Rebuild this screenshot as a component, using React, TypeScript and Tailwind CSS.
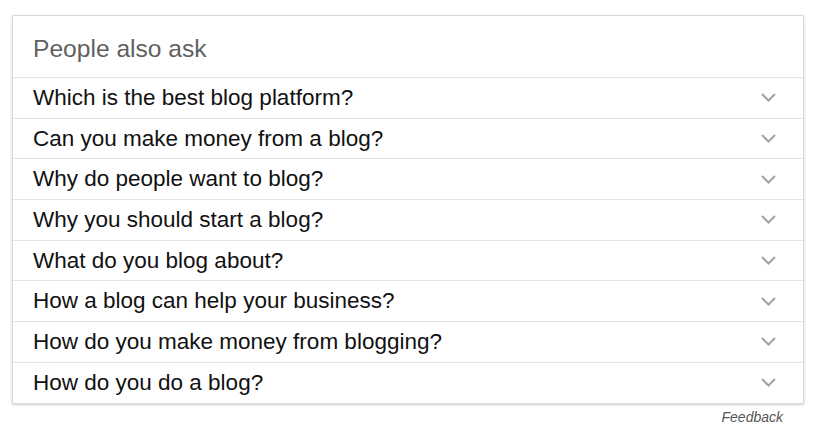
import React from "react";

const questions = [
  "Which is the best blog platform?",
  "Can you make money from a blog?",
  "Why do people want to blog?",
  "Why you should start a blog?",
  "What do you blog about?",
  "How a blog can help your business?",
  "How do you make money from blogging?",
  "How do you do a blog?",
];

function Chevron() {
  return (
    <svg width="15" height="9" viewBox="0 0 15 9" className="shrink-0">
      <polyline points="1,1 7.5,7.5 14,1" fill="none" stroke="#a3a3a3" strokeWidth="2" />
    </svg>
  );
}

export default function App() {
  return (
    <div className="w-[818px] h-[433px] bg-white pt-[15px] pl-[12px] font-['Liberation_Sans',Arial,sans-serif]">
      <div className="w-[792px] rounded-[2px] border border-[#dadada] shadow-[0_1px_3px_rgba(0,0,0,0.2)] bg-white">
        <div className="h-[61px] flex items-center pl-[20px] pt-[5px] text-[24.6px] text-[#5f5f5f]">People also ask</div>
        {questions.map((q) => (
          <div key={q} className="h-[40.7px] border-t border-[#e3e3e3] flex items-center justify-between pl-[20px] pr-[27px] text-[22.5px] text-[#111]">
            <span>{q}</span>
            <Chevron />
          </div>
        ))}
      </div>
      <div className="w-[771px] text-right text-[14px] italic text-[#555] mt-[3px]">Feedback</div>
    </div>
  );
}
